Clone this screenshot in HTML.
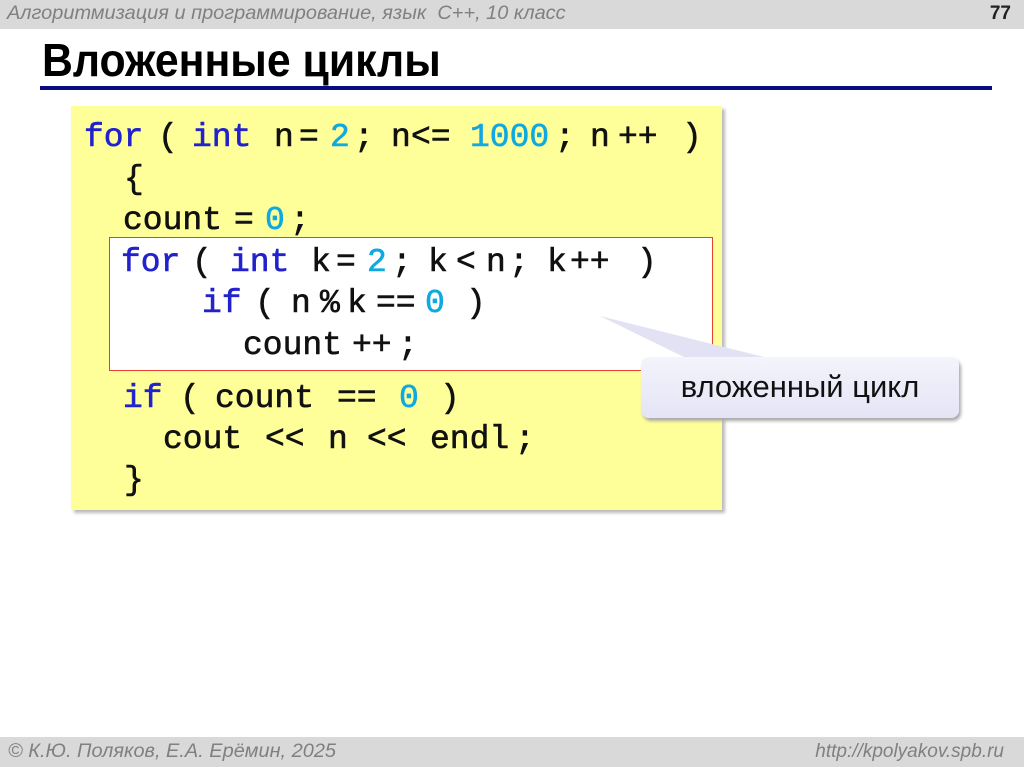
<!DOCTYPE html>
<html><head><meta charset="utf-8"><style>
body{margin:0;width:1024px;height:767px;position:relative;background:#fff;overflow:hidden;font-family:"Liberation Sans",sans-serif}
.hdr{position:absolute;left:0;top:0;width:1024px;height:29px;background:#d9d9d9}
.hdr .t{position:absolute;left:7px;top:3px;font-style:italic;font-size:19px;color:#808080;transform:scaleX(1.05);transform-origin:left}
.hdr .n{position:absolute;right:13px;top:3px;font-weight:bold;font-size:19px;color:#222}
.title{position:absolute;left:42px;top:33px;font-size:46px;font-weight:bold;color:#000;transform:scaleX(.93);transform-origin:left}
.line{position:absolute;left:40px;top:86px;width:952px;height:4px;background:#0a0a80}
.code{position:absolute;left:71px;top:106px;width:651px;height:404px;background:#ffff99;box-shadow:3px 3px 3px #bbb}
.red{position:absolute;left:109px;top:237px;width:602px;height:132px;background:#fff;border:1px solid #e8402a}
.tk{position:absolute;font-family:"Liberation Mono",monospace;font-size:33px;line-height:32px;color:#111;white-space:pre;-webkit-text-stroke:0.6px currentColor;font-variant-ligatures:none}
.k{color:#2222cc}.d{color:#10a8e0}
.ftr{position:absolute;left:0;top:737px;width:1024px;height:30px;background:#d9d9d9}
.ftr span{position:absolute;top:4px;font-style:italic;font-size:19px;color:#808080}
.call{position:absolute;left:641px;top:357px;width:318px;height:61px;border-radius:8px;background:linear-gradient(#f4f4fc,#e4e4f6);box-shadow:2px 3px 3px #aaa;font-size:31px;color:#111;text-align:center;line-height:59px}
</style></head><body>
<div class="hdr"><span class="t">Алгоритмизация и программирование, язык&nbsp; С++, 10 класс</span><span class="n">77</span></div>
<div class="title">Вложенные циклы</div>
<div class="line"></div>
<div class="code"></div>
<div class="red"></div>
<svg style="position:absolute;left:0;top:0" width="1024" height="767"><polygon points="600,316 690,360 776,360" fill="#e2e2f4"/></svg>
<div class="call">вложенный цикл</div>

<div class="tk k" style="left:84px;top:122px">for</div>
<div class="tk" style="left:158px;top:122px">(</div>
<div class="tk k" style="left:192px;top:122px">int</div>
<div class="tk" style="left:274px;top:122px">n</div>
<div class="tk" style="left:299px;top:122px">=</div>
<div class="tk d" style="left:330px;top:122px">2</div>
<div class="tk" style="left:354px;top:122px">;</div>
<div class="tk" style="left:391px;top:122px">n</div>
<div class="tk" style="left:411px;top:122px">&lt;=</div>
<div class="tk d" style="left:470px;top:122px">1000</div>
<div class="tk" style="left:555px;top:122px">;</div>
<div class="tk" style="left:590px;top:122px">n</div>
<div class="tk" style="left:618px;top:122px">++</div>
<div class="tk" style="left:682px;top:122px">)</div>

<div class="tk" style="left:124px;top:164px">{</div>

<div class="tk" style="left:123px;top:205px">count</div>
<div class="tk" style="left:234px;top:205px">=</div>
<div class="tk d" style="left:265px;top:205px">0</div>
<div class="tk" style="left:290px;top:205px">;</div>

<div class="tk k" style="left:121px;top:247px">for</div>
<div class="tk" style="left:192px;top:247px">(</div>
<div class="tk k" style="left:230px;top:247px">int</div>
<div class="tk" style="left:311px;top:247px">k</div>
<div class="tk" style="left:336px;top:247px">=</div>
<div class="tk d" style="left:367px;top:247px">2</div>
<div class="tk" style="left:392px;top:247px">;</div>
<div class="tk" style="left:428px;top:247px">k</div>
<div class="tk" style="left:456px;top:247px">&lt;</div>
<div class="tk" style="left:486px;top:247px">n</div>
<div class="tk" style="left:509px;top:247px">;</div>
<div class="tk" style="left:547px;top:247px">k</div>
<div class="tk" style="left:570px;top:247px">++</div>
<div class="tk" style="left:637px;top:247px">)</div>

<div class="tk k" style="left:202px;top:288px">if</div>
<div class="tk" style="left:255px;top:288px">(</div>
<div class="tk" style="left:291px;top:288px">n</div>
<div class="tk" style="left:320px;top:288px">%</div>
<div class="tk" style="left:347px;top:288px">k</div>
<div class="tk" style="left:376px;top:288px">==</div>
<div class="tk d" style="left:425px;top:288px">0</div>
<div class="tk" style="left:466px;top:288px">)</div>

<div class="tk" style="left:243px;top:330px">count</div>
<div class="tk" style="left:352px;top:330px">++</div>
<div class="tk" style="left:398px;top:330px">;</div>

<div class="tk k" style="left:123px;top:383px">if</div>
<div class="tk" style="left:180px;top:383px">(</div>
<div class="tk" style="left:215px;top:383px">count</div>
<div class="tk" style="left:337px;top:383px">==</div>
<div class="tk d" style="left:399px;top:383px">0</div>
<div class="tk" style="left:440px;top:383px">)</div>

<div class="tk" style="left:163px;top:424px">cout</div>
<div class="tk" style="left:265px;top:424px">&lt;&lt;</div>
<div class="tk" style="left:328px;top:424px">n</div>
<div class="tk" style="left:367px;top:424px">&lt;&lt;</div>
<div class="tk" style="left:430px;top:424px">endl</div>
<div class="tk" style="left:515px;top:424px">;</div>

<div class="tk" style="left:124px;top:465px">}</div>

<div class="ftr"><span style="left:8px;transform:scaleX(1.05);transform-origin:left">© К.Ю. Поляков, Е.А. Ерёмин, 2025</span><span style="right:20px">http://kpolyakov.spb.ru</span></div>
</body></html>
